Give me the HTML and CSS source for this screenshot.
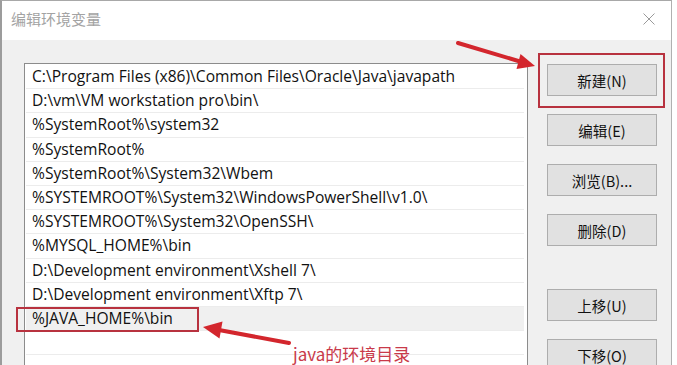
FILE: index.html
```html
<!DOCTYPE html>
<html lang="zh-CN">
<head>
<meta charset="utf-8">
<title>编辑环境变量</title>
<link rel="stylesheet" href="styles.css">
</head>
<body>
<div class="window">
  <div class="titlebar">
    <span class="title">编辑环境变量</span>
    <svg class="close" width="12" height="12" viewBox="0 0 12 12"><path d="M0.5 0.5L11.5 11.5M11.5 0.5L0.5 11.5" stroke="#9a9a9a" stroke-width="1"/></svg>
  </div>
  <div class="body">
    <div class="list">
      <div class="row">C:\Program Files (x86)\Common Files\Oracle\Java\javapath</div>
      <div class="row">D:\vm\VM workstation pro\bin\</div>
      <div class="row">%SystemRoot%\system32</div>
      <div class="row">%SystemRoot%</div>
      <div class="row">%SystemRoot%\System32\Wbem</div>
      <div class="row">%SYSTEMROOT%\System32\WindowsPowerShell\v1.0\</div>
      <div class="row">%SYSTEMROOT%\System32\OpenSSH\</div>
      <div class="row">%MYSQL_HOME%\bin</div>
      <div class="row">D:\Development environment\Xshell 7\</div>
      <div class="row">D:\Development environment\Xftp 7\</div>
      <div class="row selected">%JAVA_HOME%\bin</div>
      <div class="row"></div>
    </div>
    <div class="buttons">
      <button class="btn">新建(N)</button>
      <button class="btn">编辑(E)</button>
      <button class="btn">浏览(B)...</button>
      <button class="btn">删除(D)</button>
      <button class="btn gap">上移(U)</button>
      <button class="btn">下移(O)</button>
    </div>
  </div>
  <div class="mark mark-new"></div>
  <div class="mark mark-java"></div>
  <span class="note">java的环境目录</span>
  <svg class="arrows" width="677" height="365" viewBox="0 0 677 365">
    <line x1="458" y1="43" x2="520" y2="61.5" stroke="#d3262d" stroke-width="4" stroke-linecap="round"/>
    <polygon points="535,66 520.5,54 516.5,69" fill="#d3262d"/>
    <line x1="289" y1="343" x2="219" y2="330" stroke="#d3262d" stroke-width="4" stroke-linecap="round"/>
    <polygon points="203,327 222.5,321.5 219.5,338.5" fill="#d3262d"/>
  </svg>
</div>
</body>
</html>
```
FILE: styles.css
```css
html, body {
  margin: 0;
  padding: 0;
  background: #fff;
}
body {
  width: 677px;
  height: 365px;
  overflow: hidden;
  font-family: "Open Sans", "Noto Sans CJK SC", sans-serif;
}
.window {
  position: relative;
  width: 672px;
  height: 365px;
  border-top: 1px solid #a8a8a8;
  border-left: 2px solid #9c9c9c;
  border-right: 1px solid #b0b0b0;
  background: #f0f0f0;
  box-sizing: border-box;
  overflow: hidden;
}
.titlebar {
  height: 39px;
  background: #fff;
  display: flex;
  align-items: center;
  justify-content: space-between;
  padding: 0 16px 0 9px;
}
.title {
  font-family: "Noto Sans CJK SC", sans-serif;
  font-size: 15px;
  color: #a3a3a3;
  margin-top: -4px;
}
.close {
  margin-top: -4px;
}
.body {
  display: flex;
  padding: 23px 0 0 22px;
  gap: 19px;
}
.list {
  width: 504px;
  height: 320px;
  box-sizing: border-box;
  border: 1px solid #8c8c8c;
  border-bottom: none;
  background: #fff;
  padding: 1px 1px 0 1px;
}
.row {
  height: 24.2px;
  box-sizing: border-box;
  line-height: 23px;
  padding-left: 6px;
  margin-right: 2px;
  border-bottom: 1px solid #ececec;
  font-size: 15.6px;
  color: #111;
  white-space: nowrap;
}
.row.selected {
  background: #f0f0f0;
}
.buttons {
  display: flex;
  flex-direction: column;
  gap: 18px;
  padding-top: 1px;
}
.btn {
  width: 110px;
  height: 32px;
  background: #e1e1e1;
  border: 1px solid #adadad;
  font-family: "Noto Sans CJK SC", sans-serif;
  font-size: 14.5px;
  color: #111;
  padding: 0;
}
.btn.gap {
  margin-top: 25px;
}
.mark {
  position: absolute;
  border: 2px solid #b8323f;
  box-sizing: border-box;
}
.mark-new {
  left: 536px;
  top: 52px;
  width: 127px;
  height: 55px;
}
.mark-java {
  left: 14px;
  top: 306px;
  width: 183px;
  height: 25px;
}
.note {
  position: absolute;
  left: 291px;
  top: 342px;
  font-family: "Noto Sans CJK SC", sans-serif;
  font-size: 17px;
  line-height: 22px;
  color: #c93a4a;
}
.arrows {
  position: absolute;
  left: -2px;
  top: -1px;
  pointer-events: none;
}
```
